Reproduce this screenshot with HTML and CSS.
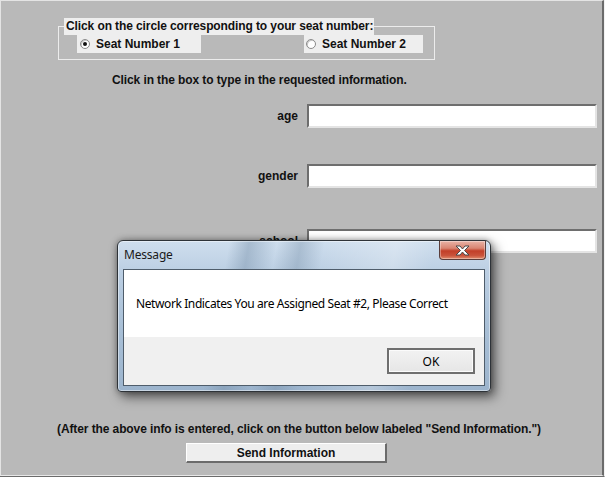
FILE: index.html
```html
<!DOCTYPE html>
<html>
<head>
<meta charset="utf-8">
<link rel="stylesheet" href="styles.css">
</head>
<body>
<div class="frame">
  <div class="applet">
    <fieldset class="seat">
      <legend>Click on the circle corresponding to your seat number:</legend>
      <div class="radios">
        <label class="radio r1"><span class="dot checked"></span>Seat Number 1</label>
        <label class="radio r2"><span class="dot"></span>Seat Number 2</label>
      </div>
    </fieldset>
    <p class="hint">Click in the box to type in the requested information.</p>
    <div class="fields">
      <div class="row row-age"><span class="lbl">age</span><span class="input"></span></div>
      <div class="row row-gender"><span class="lbl">gender</span><span class="input"></span></div>
      <div class="row row-school"><span class="lbl">school</span><span class="input"></span></div>
    </div>
    <p class="note">(After the above info is entered, click on the button below labeled "Send Information.")</p>
    <div class="send-wrap"><button class="send">Send Information</button></div>
  </div>

  <div class="dialog">
    <div class="titlebar">
      <span class="title">Message</span>
      <span class="close"><svg width="17" height="11" viewBox="0 0 17 11"><path d="M2 1h4l2.5 3 2.5-3h4l-4.5 4.5 4.5 4.5h-4l-2.5-3-2.5 3h-4l4.5-4.5z" fill="#fff" stroke="#4a4a4a" stroke-width="1" stroke-linejoin="round"/></svg></span>
    </div>
    <div class="client">
      <div class="msg">Network Indicates You are Assigned Seat #2, Please Correct</div>
      <div class="actions"><button class="ok">OK</button></div>
    </div>
  </div>
</div>
</body>
</html>
```

FILE: styles.css
```css
* { box-sizing: border-box; }
html, body { margin: 0; padding: 0; }
body { width: 605px; height: 477px; overflow: hidden; background: #b9b9b9; }

.frame {
  position: relative;
  width: 605px;
  height: 477px;
  border-right: 1px solid #f2f2f2;
  border-bottom: 1px solid #6b6b6b;
}
.applet {
  height: 100%;
  background: #b9b9b9;
  border-top: 1px solid #e4e4e4;
  border-left: 1px solid #e4e4e4;
  border-right: 2px solid #6b6b6b;
  border-bottom: 1px solid #e8e8e8;
  font-family: "Liberation Sans", Arial, sans-serif;
  font-weight: bold;
  font-size: 12px;
  color: #111;
  padding-top: 17px;
}

.seat {
  margin: 0 0 0 57px;
  width: 377px;
  padding: 0 0 6px 0;
  border: 1px solid #ececec;
}
.seat legend {
  margin-left: 5px;
  padding: 0 1px 0 2px;
  background: #eeeeee;
  height: 17px;
  line-height: 17px;
  letter-spacing: -0.1px;
}
.radios {
  display: flex;
  justify-content: space-between;
  padding: 0 11px 0 18px;
}
.radio {
  display: flex;
  align-items: center;
  height: 18px;
  background: #eeeeee;
  padding-left: 3px;
}
.r1 { width: 124px; }
.r2 { width: 119px; padding-left: 2px; }
.dot {
  width: 10px;
  height: 10px;
  border-radius: 50%;
  margin-right: 6px;
  background: #fff;
  border: 1px solid #8a8a8a;
  box-shadow: inset 1px 1px 0 #c8c8c8;
  position: relative;
}
.dot.checked::after {
  content: "";
  position: absolute;
  left: 2px;
  top: 2px;
  width: 4px;
  height: 4px;
  border-radius: 50%;
  background: #111;
}

.hint {
  margin: 13px 0 0 0;
  padding-left: 111px;
  line-height: 14px;
  letter-spacing: -0.1px;
}

.fields { margin-top: 17px; }
.row {
  display: grid;
  grid-template-columns: 297px 290px;
  column-gap: 9px;
  align-items: center;
  height: 24px;
}
.row-gender { margin-top: 36px; }
.row-school { margin-top: 41px; }
.lbl { text-align: right; }
.input {
  display: block;
  height: 24px;
  background: #fff;
  border-top: 2px solid #6e6e6e;
  border-left: 2px solid #6e6e6e;
  border-right: 2px solid #e4e4e4;
  border-bottom: 2px solid #e4e4e4;
}

.note {
  margin: 169px 0 0 0;
  padding-left: 56px;
  line-height: 14px;
  letter-spacing: -0.1px;
}
.send-wrap { padding-left: 185px; margin-top: 7px; }
.send {
  display: block;
  width: 201px;
  height: 20px;
  padding: 0;
  font: inherit;
  line-height: 16px;
  color: #111;
  background: #eeeeee;
  border-top: 1px solid #ffffff;
  border-left: 1px solid #ffffff;
  border-right: 2px solid #6b6b6b;
  border-bottom: 2px solid #6b6b6b;
}

/* Windows 7 style message dialog */
.dialog {
  position: absolute;
  left: 117px;
  top: 240px;
  width: 374px;
  height: 152px;
  border: 1px solid #2e3338;
  border-radius: 6px 6px 4px 4px;
  background:
    linear-gradient(100deg, rgba(255,255,255,0) 28%, rgba(120,145,170,0.45) 33%, rgba(255,255,255,0) 40%, rgba(110,135,160,0.35) 46%, rgba(255,255,255,0) 52%, rgba(255,255,255,0.25) 70%, rgba(255,255,255,0) 80%),
    linear-gradient(to bottom, #cfdeee 0%, #bccfe3 20%, #a8bfd6 60%, #9cb4cd 100%);
  box-shadow: 4px 5px 12px rgba(0,0,0,0.55), 0 0 6px rgba(0,0,0,0.35), inset 0 0 0 1px rgba(255,255,255,0.45);
  padding: 0 5px 5px 5px;
  font-family: "Noto Sans", "Open Sans", sans-serif;
  font-size: 12px;
  color: #000;
}
.titlebar {
  position: relative;
  height: 28px;
}
.title {
  position: absolute;
  left: 1px;
  top: 6px;
  line-height: 16px;
  color: #1a1a1a;
  letter-spacing: -0.2px;
}
.close {
  position: absolute;
  right: -1px;
  top: 0;
  width: 47px;
  height: 19px;
  display: flex;
  align-items: center;
  justify-content: center;
  border: 1px solid #5a3d3a;
  border-top: none;
  border-radius: 0 0 4px 4px;
  background: linear-gradient(to bottom, #e9b3a6 0%, #d98572 40%, #c23f28 55%, #c9523a 80%, #e08d6d 100%);
  box-shadow: inset 0 0 0 1px rgba(255,255,255,0.35);
}
.client {
  height: 117px;
  border: 1px solid #4f5d6b;
  background: #f0f0f0;
  display: flex;
  flex-direction: column;
}
.msg {
  height: 67px;
  background: #fff;
  padding-left: 12px;
  display: flex;
  align-items: center;
  white-space: nowrap;
  letter-spacing: -0.4px;
}
.actions {
  display: flex;
  justify-content: flex-end;
  padding: 11px 9px 0 0;
}
.ok {
  width: 88px;
  height: 26px;
  padding: 0;
  font: inherit;
  color: #000;
  background: linear-gradient(to bottom, #f2f2f2, #e6e6e6);
  border: 2px solid #6f6f6f;
  box-shadow: inset 0 0 0 1px #fbfbfb;
}
```
